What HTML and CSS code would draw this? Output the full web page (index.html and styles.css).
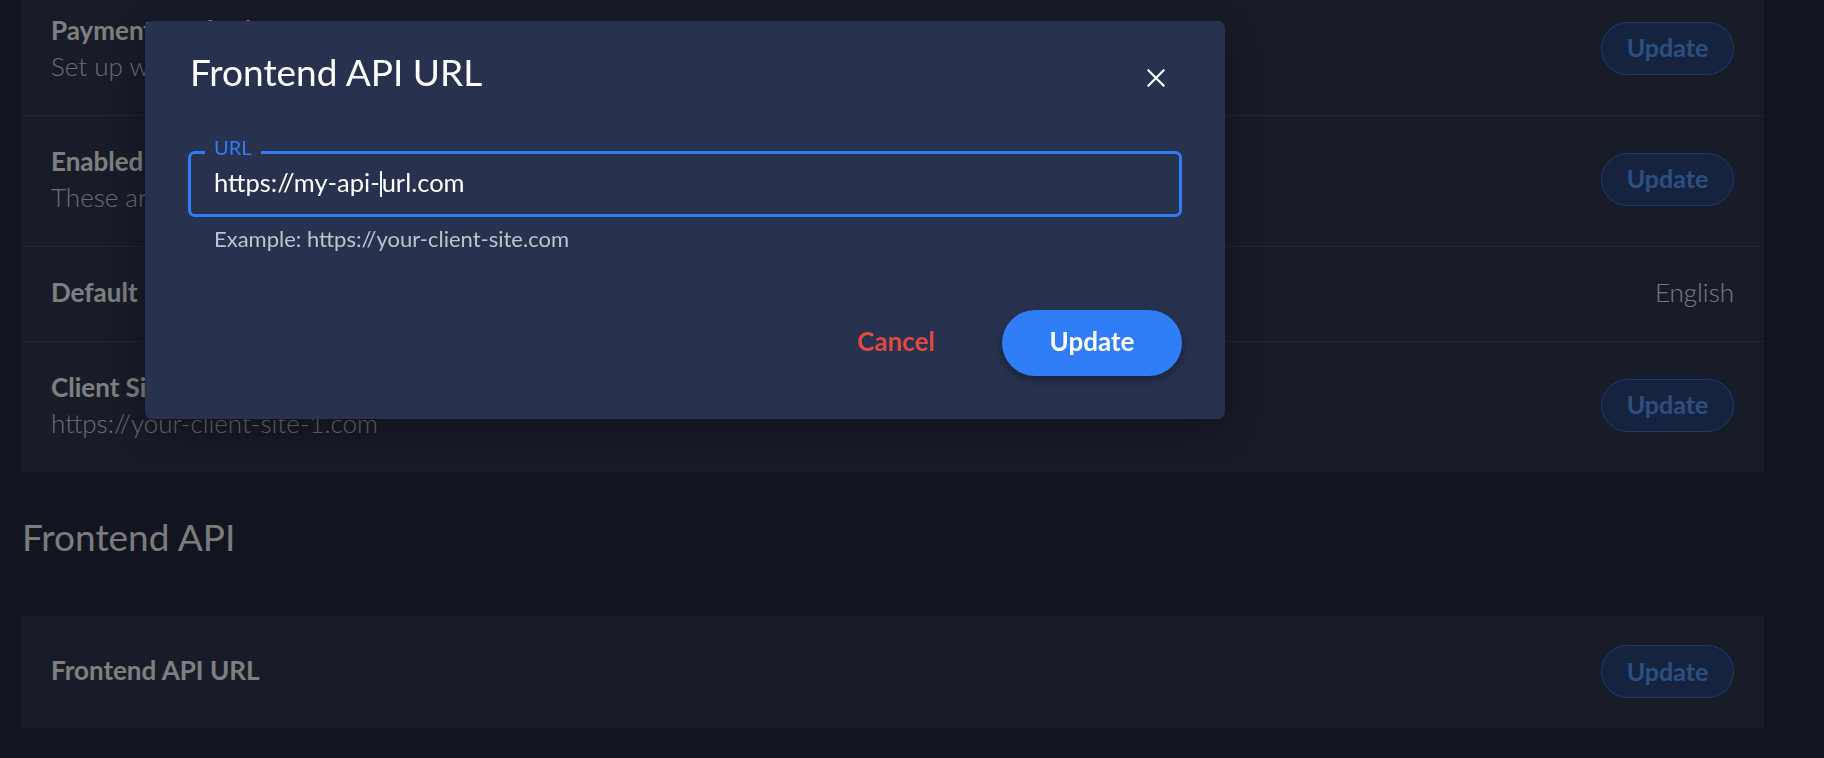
FILE: index.html
```html
<!DOCTYPE html>
<html lang="en">
<head>
  <meta charset="UTF-8">
  <meta name="viewport" content="width=device-width, initial-scale=1.0">
  <title>Settings</title>
  <link rel="stylesheet" href="styles.css">
</head>
<body>
  <div class="page">
    <section class="card">
      <div class="row">
        <div class="row-text">
          <div class="row-title">Payment Methods</div>
          <div class="row-sub">Set up which payment methods are available to your customers</div>
        </div>
        <button class="btn-outline">Update</button>
      </div>
      <div class="row">
        <div class="row-text">
          <div class="row-title">Enabled Languages</div>
          <div class="row-sub">These are the languages your customers can choose from</div>
        </div>
        <button class="btn-outline">Update</button>
      </div>
      <div class="row">
        <div class="row-text">
          <div class="row-title">Default Language</div>
        </div>
        <span class="row-value">English</span>
      </div>
      <div class="row">
        <div class="row-text">
          <div class="row-title">Client Site URLs</div>
          <div class="row-sub">https://your-client-site-1.com</div>
        </div>
        <button class="btn-outline">Update</button>
      </div>
    </section>

    <h2 class="section-title">Frontend API</h2>

    <section class="card">
      <div class="row row-single">
        <div class="row-text">
          <div class="row-title">Frontend API URL</div>
        </div>
        <button class="btn-outline">Update</button>
      </div>
    </section>
  </div>

  <!-- dialog -->
  <div class="backdrop">
    <div class="modal">
      <div class="modal-head">
        <h2 class="modal-title">Frontend API URL</h2>
        <button class="close" aria-label="Close">
          <svg width="18" height="18" viewBox="0 0 18 18"><path d="M1.5 1.5L16.5 16.5M16.5 1.5L1.5 16.5" stroke="#fff" stroke-width="2.2" stroke-linecap="square"/></svg>
        </button>
      </div>
      <div class="field">
        <label class="field-label">URL</label>
        <div class="field-value">https://my-api-<span class="caret"></span>url.com</div>
      </div>
      <p class="field-hint">Example: https://your-client-site.com</p>
      <div class="modal-actions">
        <button class="btn-text">Cancel</button>
        <button class="btn-primary">Update</button>
      </div>
    </div>
  </div>
</body>
</html>
```

FILE: styles.css
```css
body {
  margin: 0;
  background: #242a3e;
  font-family: "Lato", "Noto Sans", sans-serif;
  color: #fefefe;
  overflow: hidden;
}
.page {
  margin-top: -15px;
  padding: 0 60px 0 22px;
}
.card {
  background: #303852;
}
.row {
  display: flex;
  align-items: center;
  justify-content: space-between;
  padding: 30px 30px 34px 29px;
  border-bottom: 1px solid #444c66;
}
.row:last-child {
  border-bottom: none;
}
.row-single {
  padding: 29px 30px 30px 29px;
}
.row-single .row-text {
  padding-bottom: 4px;
}
.row-title {
  font-size: 26px;
  line-height: 30px;
  font-weight: 700;
  color: #fefefe;
}
.row-sub {
  margin-top: 6px;
  font-size: 26px;
  line-height: 30px;
  font-weight: 300;
  color: #d6d9e1;
}
.row-value {
  font-size: 26px;
  line-height: 30px;
  font-weight: 300;
  color: #eef0f5;
}
.btn-outline {
  height: 53px;
  width: 133px;
  padding: 0 0 2px;
  border-radius: 27px;
  border: 1px solid #3c76d8;
  background: #2c467e;
  color: #5a9eff;
  font-family: inherit;
  font-size: 25px;
  font-weight: 700;
  cursor: pointer;
}
.section-title {
  margin: 43px 0 57px;
  font-size: 37px;
  line-height: 44px;
  font-weight: 400;
  color: #f6f7fa;
}

/* dialog */
.backdrop {
  position: fixed;
  inset: 0;
  background: rgba(0, 0, 0, 0.5);
}
.modal {
  position: absolute;
  left: 145px;
  top: 21px;
  width: 1080px;
  box-sizing: border-box;
  padding: 29px 43px 43px 43px;
  background: #28324f;
  border-radius: 7px;
  box-shadow: 0 12px 40px rgba(0, 0, 0, 0.35);
}
.modal-head {
  display: flex;
  justify-content: space-between;
  align-items: flex-start;
}
.modal-title {
  margin: 0 0 0 2px;
  font-size: 37px;
  line-height: 44px;
  font-weight: 400;
  color: #fff;
}
.close {
  width: 18px;
  height: 18px;
  padding: 0;
  margin: 19px 17px 0 0;
  border: none;
  background: none;
  cursor: pointer;
  display: flex;
}
.field {
  position: relative;
  margin-top: 57px;
  height: 66px;
  box-sizing: border-box;
  border: 3px solid #2f7cf6;
  border-radius: 7px;
  display: flex;
  align-items: center;
  padding: 0 0 4px 23px;
}
.field-label {
  position: absolute;
  top: -17px;
  left: 14px;
  padding: 0 9px;
  background: #28324f;
  font-size: 20px;
  line-height: 20px;
  color: #2f7cf6;
}
.field-value {
  font-size: 25.5px;
  color: #fff;
  display: flex;
  align-items: center;
  white-space: pre;
}
.caret {
  display: inline-block;
  width: 2px;
  height: 26px;
  margin-top: 3px;
  background: #fff;
}
.field-hint {
  margin: 10px 0 0 26px;
  font-size: 22px;
  line-height: 24px;
  color: #bfc3cd;
}
.modal-actions {
  margin-top: 59px;
  display: flex;
  justify-content: flex-end;
  align-items: center;
  gap: 67px;
}
.btn-text {
  padding: 0 0 4px;
  border: none;
  background: none;
  font-family: inherit;
  font-size: 26px;
  font-weight: 700;
  color: #e0493f;
  cursor: pointer;
}
.btn-primary {
  width: 180px;
  height: 66px;
  padding: 0 0 4px;
  border: none;
  border-radius: 33px;
  background: #2f7ef7;
  color: #fff;
  font-family: inherit;
  font-size: 26px;
  font-weight: 700;
  box-shadow: 0 4px 10px rgba(0, 0, 0, 0.35);
  cursor: pointer;
}
```
